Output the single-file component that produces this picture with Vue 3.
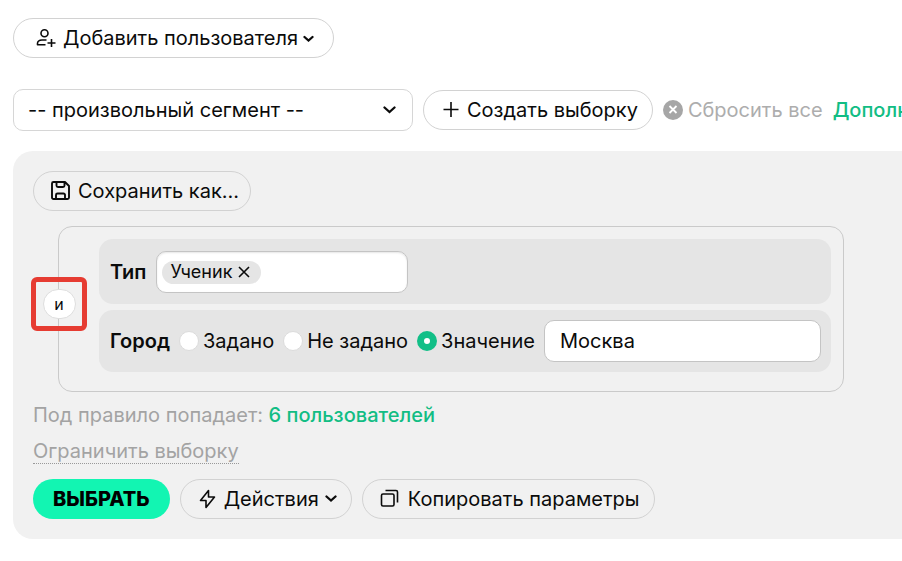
<script setup>
import { ref } from 'vue'

const segment = ref('custom')
const cityMode = ref('value')
const city = ref('Москва')
const tags = ref(['Ученик'])
const modes = [
  { id: 'set', label: 'Задано' },
  { id: 'unset', label: 'Не задано' },
  { id: 'value', label: 'Значение' },
]
</script>

<template>
  <main class="page">
    <div class="top">
      <button type="button" class="pill pill-user">
        <svg class="icon" width="20" height="20" viewBox="0 0 20 20" aria-hidden="true">
          <circle cx="8.5" cy="5.2" r="3.5" />
          <path d="M10.500 12H6C3 12 1.500 13.500 1.500 15.500V16.800H9.500M15.500 11v8M11.500 15h8" />
        </svg>
        <span>Добавить пользователя</span>
        <svg class="chevron" width="12" height="8" viewBox="0 0 12 8" aria-hidden="true"><path d="M1.500 3l4 3.500 4-3.500" /></svg>
      </button>
    </div>

    <div class="toolbar">
      <div class="select-wrap">
        <select v-model="segment" class="field segment" aria-label="Сегмент">
          <option value="custom">-- произвольный сегмент --</option>
        </select>
        <svg class="chevron select-arrow" width="14" height="10" viewBox="0 0 14 10" aria-hidden="true"><path d="M1.500 2.500l5 4.500 5-4.500" /></svg>
      </div>
      <button type="button" class="pill">
        <svg class="icon" width="18" height="18" viewBox="0 0 18 18" aria-hidden="true"><path d="M10 1v15M2.500 8.500h15" /></svg>
        <span>Создать выборку</span>
      </button>
      <button type="button" class="reset">
        <svg width="20" height="20" viewBox="0 0 20 20" aria-hidden="true">
          <circle cx="10" cy="10" r="10" fill="#a6a6a6" />
          <path d="M6.500 6l7 7M13.500 6l-7 7" stroke="#fff" stroke-width="1.800" />
        </svg>
        <span>Сбросить все</span>
      </button>
      <a href="#" class="green">Дополн</a>
    </div>

    <section class="panel">
      <button type="button" class="pill pill-save">
        <svg class="icon icon-save" width="20" height="20" viewBox="0 0 20 20" aria-hidden="true">
          <path d="M2.500 1h11.500L18 5v11.500a1.500 1.500 0 0 1-1.500 1.500H2.500A1.500 1.500 0 0 1 1 16.500V2.500A1.500 1.500 0 0 1 2.500 1zM5.500 1v3.500a1.500 1.500 0 0 0 1.500 1.500h5a1.500 1.500 0 0 0 1.500-1.500V1M5 18v-4a1.500 1.500 0 0 1 1.500-1.500h6a1.500 1.500 0 0 1 1.500 1.500V18" />
        </svg>
        <span>Сохранить как...</span>
      </button>

      <div class="group">
        <div class="marker"><button type="button" class="operator">и</button></div>
        <div class="rule rule-type">
          <label class="name" for="type">Тип</label>
          <div class="field tags">
            <span v-for="tag in tags" :key="tag" class="tag">
              {{ tag }}
              <button type="button" class="remove" :aria-label="'Удалить ' + tag">
                <svg class="icon" width="12" height="12" viewBox="0 0 12 12" aria-hidden="true"><path d="M1 1l10 10M11 1L1 11" /></svg>
              </button>
            </span>
            <input id="type" type="text" class="tag-input" />
          </div>
        </div>
        <div class="rule">
          <span class="name">Город</span>
          <label v-for="m in modes" :key="m.id" class="choice">
            <input v-model="cityMode" type="radio" name="city-mode" :value="m.id" />
            <span>{{ m.label }}</span>
          </label>
          <input v-model="city" type="text" class="field city" aria-label="Город" />
        </div>
      </div>

      <p class="summary">Под правило попадает: <a href="#" class="green">6 пользователей</a></p>
      <p class="limit"><a href="#">Ограничить выборку</a></p>

      <div class="actions">
        <button type="button" class="pill primary">ВЫБРАТЬ</button>
        <button type="button" class="pill">
          <svg class="icon" width="18" height="20" viewBox="0 0 18 20" aria-hidden="true"><path d="M10.500 1.500L2.500 11.500h5.500v7L16.500 8h-6z" /></svg>
          <span>Действия</span>
          <svg class="chevron" width="12" height="8" viewBox="0 0 12 8" aria-hidden="true"><path d="M1.500 1.500l4.500 4 4.500-4" /></svg>
        </button>
        <button type="button" class="pill">
          <svg class="icon" width="20" height="20" viewBox="0 0 20 20" aria-hidden="true">
            <rect x="1.500" y="5" width="12.500" height="12" rx="1.500" />
            <path d="M5.500 1.500h10.500a1.500 1.500 0 0 1 1.500 1.500V13.500" />
          </svg>
          <span>Копировать параметры</span>
        </button>
      </div>
    </section>
  </main>
</template>

<style>
body {
  margin: 0;
  background: #fff;
  overflow-x: hidden;
}
</style>

<style scoped>
.page {
  padding: 18px 0 22px 13px;
  overflow: hidden;
  color: #0b0b0b;
  font: 400 20px/24px Inter, "Noto Sans", sans-serif;
}
.page * {
  box-sizing: border-box;
}
button,
input,
select {
  font: inherit;
  color: inherit;
}
button {
  cursor: pointer;
}
svg {
  flex: none;
}
.icon {
  fill: none;
  stroke: currentColor;
  stroke-width: 1.6;
  stroke-linejoin: round;
}
.icon-save {
  stroke-width: 1.9;
}
.chevron {
  fill: none;
  stroke: currentColor;
  stroke-width: 2.3;
  stroke-linecap: round;
}
.pill {
  display: inline-flex;
  align-items: center;
  gap: 8px;
  height: 40px;
  padding: 0 14px 0 17px;
  border: 1px solid #d2d2d2;
  border-radius: 20px;
  background: transparent;
  white-space: nowrap;
}
.pill .chevron {
  margin-left: -2px;
}
.pill-user {
  gap: 7px;
  padding: 0 18px 0 22px;
}
.pill-save {
  gap: 7px;
  padding-right: 11px;
}
.top {
  display: flex;
}
.toolbar {
  display: flex;
  align-items: center;
  gap: 10px;
  margin: 31px 0 20px;
  white-space: nowrap;
}
.select-wrap {
  display: grid;
  flex: none;
  width: 400px;
  align-items: center;
}
.select-wrap > * {
  grid-area: 1 / 1;
}
.select-arrow {
  justify-self: end;
  margin-right: 16px;
  pointer-events: none;
}
.field {
  height: 42px;
  border: 1px solid #c4c4c4;
  border-radius: 10px;
  background: #fff;
  outline: none;
}
.segment {
  width: 100%;
  padding: 0 40px 0 14px;
  border-color: #d6d6d6;
  appearance: none;
}
.reset {
  display: flex;
  align-items: center;
  gap: 5px;
  padding: 0;
  border: 0;
  background: none;
  color: #adadad;
}
.green {
  color: #12bd84;
  font-weight: 500;
  text-decoration: none;
}
.panel {
  padding: 20px;
  border-radius: 20px 0 0 20px;
  background: #f1f1f1;
}
.group {
  position: relative;
  display: grid;
  grid-template-columns: minmax(0, 1fr);
  gap: 6px;
  margin: 15px 38px 0 25px;
  padding: 12px 12px 19px 40px;
  border: 1px solid #cacaca;
  border-radius: 14px;
}
.marker {
  position: absolute;
  top: 50px;
  left: -28px;
  display: grid;
  place-items: center;
  width: 56px;
  height: 54px;
  border: 5px solid #e63c32;
  border-radius: 6px;
}
.operator {
  width: 33px;
  height: 30px;
  padding: 0;
  border: 1px solid #dedede;
  border-radius: 16px;
  background: #fff;
  font-size: 16px;
  line-height: 24px;
}
.rule {
  display: flex;
  align-items: center;
  gap: 9px;
  padding: 10px 10px 10px 11px;
  border-radius: 14px;
  background: #e5e5e5;
}
.rule-type {
  gap: 10px;
  padding-top: 12px;
  padding-bottom: 11px;
}
.name {
  font-weight: 600;
}
.tags {
  display: flex;
  align-items: center;
  width: 252px;
  padding: 0 5px;
  box-shadow: inset 0 1px 2px #0000001a;
}
.tag {
  display: inline-flex;
  align-items: center;
  gap: 6px;
  height: 23px;
  padding: 0 11px 0 8px;
  border-radius: 12px;
  background: #e5e5e5;
  font-size: 18px;
}
.remove {
  display: flex;
  padding: 0;
  border: 0;
  background: none;
}
.tag-input {
  flex: 1;
  min-width: 0;
  padding: 0;
  border: 0;
  background: none;
  outline: none;
}
.choice {
  display: flex;
  align-items: center;
  gap: 4px;
  white-space: nowrap;
}
.choice input {
  width: 20px;
  height: 20px;
  margin: 0;
  border: 1px solid #dcdcdc;
  border-radius: 50%;
  background: #fff;
  appearance: none;
}
.choice input:checked {
  border: 7px solid #12bf87;
}
.city {
  flex: 1;
  min-width: 0;
  padding: 0 15px;
}
.summary,
.limit {
  margin: 11px 0 0;
  color: #a3a3a3;
}
.limit {
  margin-top: 12px;
}
.limit a {
  border-bottom: 1px dotted #999;
  color: inherit;
  text-decoration: none;
}
.actions {
  display: flex;
  gap: 10px;
  margin-top: 16px;
}
.primary {
  padding: 0 20px;
  border: 0;
  background: #12f5b2;
  color: #000;
  font-weight: 800;
}
</style>
